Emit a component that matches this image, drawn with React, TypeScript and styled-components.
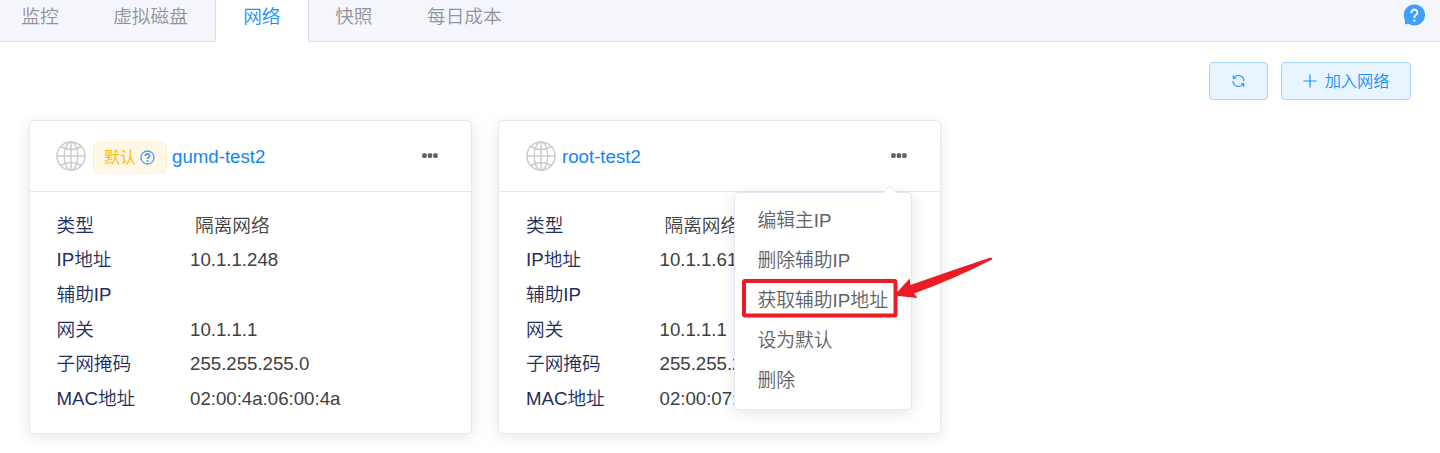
import React from 'react';
import styled, { createGlobalStyle } from 'styled-components';

const GlobalStyle = createGlobalStyle`
  * { box-sizing: border-box; }
  body {
    margin: 0;
    background: #fff;
    overflow: hidden;
    font-family: "Liberation Sans", "Noto Sans CJK SC", sans-serif;
    font-weight: 350;
    font-size: 18.67px;
    color: #303133;
  }
`;

const Page = styled.div`
  position: relative;
  height: 453px;
  overflow: hidden;
`;

const TabBar = styled.nav`
  display: flex;
  justify-content: space-between;
  height: 42px;
  background: #f5f6fb;
  border-bottom: 1px solid #dcdfe6;
`;

const TabList = styled.div`
  display: flex;
  margin-left: -6px;
`;

const Tab = styled.div<{ $active?: boolean }>`
  height: 42px;
  padding: ${(p) => (p.$active ? '0 27.7px 0 27px' : '0 26.3px')};
  margin-right: ${(p) => (p.$active ? -1.3 : 0)}px;
  border: solid ${(p) => (p.$active ? '#dcdfe6' : 'transparent')};
  border-width: 0 1px;
  background: ${(p) => (p.$active ? '#fff' : 'transparent')};
  color: ${(p) => (p.$active ? '#1890ff' : '#909399')};
  line-height: 34px;
  white-space: nowrap;
`;

const Help = styled.svg`
  width: 22px;
  height: 22px;
  margin: 4px 15px 0 0;
`;

const Toolbar = styled.div`
  display: flex;
  justify-content: flex-end;
  gap: 13px;
  padding: 20px 29px 0 0;
`;

const Button = styled.button<{ $width: number }>`
  display: flex;
  align-items: center;
  justify-content: center;
  gap: 8px;
  width: ${(p) => p.$width}px;
  height: 38px;
  padding: 0;
  border: 1px solid #a3d3ff;
  border-radius: 4px;
  background: #e8f4ff;
  color: #1890ff;
  font: inherit;
  font-size: 16.2px;
`;

const ButtonText = styled.span`
  margin-top: -2px;
`;

const Cards = styled.main`
  display: flex;
  gap: 26px;
  padding: 20px 0 0 29px;
`;

const Card = styled.section`
  width: 443px;
  height: 314px;
  border: 1px solid #e6e9f5;
  border-radius: 5px;
  background: #fff;
  box-shadow: 0 3px 16px rgba(0, 0, 0, 0.1);

  & + & > * {
    padding-left: 27px;
  }
`;

const CardHeader = styled.header`
  display: flex;
  align-items: center;
  height: 71px;
  padding: 0 33px 0 26px;
  border-bottom: 1px solid #e6e9f5;
`;

const Title = styled.a`
  margin-left: 6px;
  padding-top: 2px;
  color: #1386ec;
  line-height: 22px;
`;

const Tag = styled.span`
  display: flex;
  align-items: center;
  gap: 4px;
  height: 32px;
  margin: 3px -1px 0 7px;
  padding: 0 11px 0 10px;
  border: 1px solid #fff1cc;
  border-radius: 5px;
  background: #fff8e6;
  color: #ffba00;
  font-size: 16px;
  font-weight: 400;
  line-height: 26px;
`;

const More = styled.div`
  position: relative;
  display: flex;
  margin-left: auto;
`;

const Fields = styled.dl`
  display: grid;
  grid-template-columns: 133.5px 1fr;
  grid-template-rows: 35px 34px 35px 35px 34px 35px;
  align-items: center;
  margin: 0;
  padding: 16px 0 0 26.5px;
  line-height: 34px;
`;

const Label = styled.dt`
  color: #1f2d5c;
`;

const Value = styled.dd<{ $indent?: boolean }>`
  margin: 0;
  padding-left: ${(p) => (p.$indent ? 5 : 0)}px;
  color: #404040;
`;

const Menu = styled.ul`
  position: absolute;
  top: 39px;
  right: -5px;
  z-index: 2;
  width: 178px;
  height: 218px;
  margin: 0;
  padding: 8px 0;
  list-style: none;
  border: 1px solid #e4e8f5;
  border-radius: 5px;
  background: #fff;
  box-shadow: 0 3px 16px rgba(0, 0, 0, 0.11);
`;

const MenuArrow = styled.svg`
  position: absolute;
  top: -8px;
  right: 13px;
`;

const MenuItem = styled.li`
  height: 40.1px;
  padding-left: 22.5px;
  color: #606266;
  font-size: 18.8px;
  line-height: 40px;
  white-space: nowrap;
`;

const Annotation = styled.svg`
  position: absolute;
  top: 250px;
  left: 735px;
  z-index: 3;
  pointer-events: none;
`;

const Globe = () => (
  <svg width="30" height="30" viewBox="0 0 30 30" fill="none" stroke="#ccc" strokeWidth="1.5">
    <circle cx="15" cy="15" r="14.1" />
    <ellipse cx="15" cy="15" rx="6.8" ry="14.1" />
    <path d="M15 1v28M1 15h28M4.5 5.5Q15 11.4 25.5 5.5M4.5 24.5Q15 18.6 25.5 24.5" />
  </svg>
);

const Dots = () => (
  <svg width="16" height="6" viewBox="0 0 16 6" fill="#606266">
    <rect x="0.2" y="0.2" width="4.5" height="4.8" rx="1.4" />
    <rect x="5.7" y="0.2" width="4.5" height="4.8" rx="1.4" />
    <rect x="11.2" y="0.2" width="4.5" height="4.8" rx="1.4" />
  </svg>
);

const Question = () => (
  <svg width="15" height="15" viewBox="0 0 15 15" fill="none" stroke="#409eff">
    <circle cx="7.5" cy="7.5" r="6.5" strokeWidth="1.3" />
    <path d="M5.3 6a2.1 2 0 1 1 3.4 1.5Q7.5 8.1 7.5 9.1" strokeWidth="1.8" />
    <path d="M7.5 10.1v1.7" strokeWidth="1.9" />
  </svg>
);

const Refresh = () => (
  <svg width="14" height="14" viewBox="0 0 14 14" fill="none" stroke="#1890ff" strokeWidth="1.1">
    <path d="M1.3 1.3v2.9h2.9M1.7 4A5.6 5.4 0 0 1 12 7M11.7 12.7V9.8h-2.9M11.3 10A5.6 5.4 0 0 1 1 7" />
  </svg>
);

const Plus = () => (
  <svg width="14" height="14" viewBox="0 0 14 14" stroke="#1890ff" strokeWidth="1.2">
    <path d="M7 .5v13M.5 7h13" />
  </svg>
);

const tabs = ['监控', '虚拟磁盘', '网络', '快照', '每日成本'];
const menuItems = ['编辑主IP', '删除辅助IP', '获取辅助IP地址', '设为默认', '删除'];
const labels = ['类型', 'IP地址', '辅助IP', '网关', '子网掩码', 'MAC地址'];

const networks = [
  {
    name: 'gumd-test2',
    isDefault: true,
    menuOpen: false,
    values: ['隔离网络', '10.1.1.248', '', '10.1.1.1', '255.255.255.0', '02:00:4a:06:00:4a'],
  },
  {
    name: 'root-test2',
    isDefault: false,
    menuOpen: true,
    values: ['隔离网络', '10.1.1.61', '', '10.1.1.1', '255.255.255.0', '02:00:07:'],
  },
];

export default function App() {
  return (
    <Page>
      <GlobalStyle />
      <TabBar>
        <TabList>
          {tabs.map((t) => (
            <Tab key={t} $active={t === '网络'}>{t}</Tab>
          ))}
        </TabList>
        <Help viewBox="0 0 22 22">
          <path d="M11.4 .4a10.6 10.6 0 1 1-5.4 19.7L2 20.3V16A10.6 10.6 0 0 1 11.4 .4Z" fill="#409eff" />
          <path d="M8.4 8.4a3 2.9 0 1 1 4.7 2.4Q11.4 11.9 11.4 13.2" fill="none" stroke="#fff" strokeWidth="1.8" strokeLinecap="round" />
          <circle cx="11.4" cy="16.6" r="1.2" fill="#fff" />
        </Help>
      </TabBar>
      <Toolbar>
        <Button $width={59} aria-label="刷新"><Refresh /></Button>
        <Button $width={130}><Plus /><ButtonText>加入网络</ButtonText></Button>
      </Toolbar>
      <Cards>
        {networks.map((n) => (
          <Card key={n.name}>
            <CardHeader>
              <Globe />
              {n.isDefault && <Tag>默认<Question /></Tag>}
              <Title>{n.name}</Title>
              <More>
                <Dots />
                {n.menuOpen && (
                  <Menu>
                    <MenuArrow width="16" height="9" viewBox="0 0 16 9">
                      <path d="M0 9 8 1l8 8Z" fill="#fff" />
                      <path d="M1 8 8 1l7 7" fill="none" stroke="#e4e8f5" />
                    </MenuArrow>
                    {menuItems.map((m) => <MenuItem key={m}>{m}</MenuItem>)}
                  </Menu>
                )}
              </More>
            </CardHeader>
            <Fields>
              {labels.map((label, i) => (
                <React.Fragment key={label}>
                  <Label>{label}</Label>
                  <Value $indent={i === 0}>{n.values[i]}</Value>
                </React.Fragment>
              ))}
            </Fields>
          </Card>
        ))}
      </Cards>
      <Annotation width="265" height="75" viewBox="735 250 265 75">
        <rect x="744" y="281" width="151.5" height="34.5" rx="1" fill="none" stroke="#ed1c24" strokeWidth="4" />
        <path d="M894 295.5 909.7 278.5 910.5 285Q950 271 990.5 257.5Q993 257.8 992 259.5Q955 278.5 914 293.5L917.5 298Z" fill="#ed1c24" />
      </Annotation>
    </Page>
  );
}
